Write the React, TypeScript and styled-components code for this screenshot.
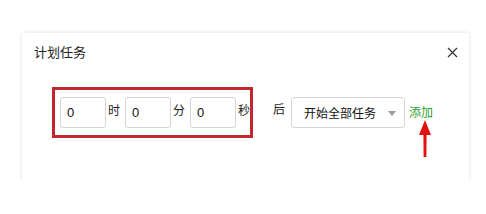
import styled, { createGlobalStyle } from "styled-components";

const Global = createGlobalStyle`
  html, body {
    margin: 0;
    padding: 0;
    background: #ffffff;
    font-family: "Liberation Sans", "Noto Sans CJK SC", sans-serif;
  }
`;

const Page = styled.div`
  padding: 33px 0 0 22px;
`;

const Card = styled.div`
  width: 447px;
  height: 148px;
  box-sizing: border-box;
  background: #fff;
  border-radius: 3px;
  box-shadow: 0 0 4px rgba(0, 0, 0, 0.14);
  display: flex;
  flex-direction: column;
`;

const Header = styled.div`
  display: flex;
  justify-content: space-between;
  align-items: center;
  padding: 8px 10px 0 12px;
  height: 24px;
`;

const Title = styled.div`
  font-size: 13px;
  color: #222;
  line-height: 16px;
`;

const Close = styled.button`
  border: none;
  background: none;
  padding: 0;
  width: 12px;
  height: 12px;
  display: flex;
  cursor: pointer;
`;

const Body = styled.div`
  display: flex;
  align-items: flex-start;
  padding: 22px 0 0 30px;
`;

const TimeBox = styled.div`
  display: flex;
  align-items: flex-start;
  border: 3px solid #c1272d;
  padding: 7px 2px 7px 5px;
  width: 201px;
  height: 51px;
  box-sizing: border-box;
`;

const Field = styled.input`
  width: 46px;
  height: 31px;
  box-sizing: border-box;
  border: 1px solid #d4d4d4;
  border-radius: 3px;
  padding: 0 0 0 6px;
  font-size: 13px;
  color: #111;
  font-family: "Liberation Sans", sans-serif;
  outline: none;
  background: #fff;
`;

const Unit = styled.span<{ $gap?: number }>`
  font-size: 12px;
  color: #222;
  line-height: 14px;
  padding-top: 7px;
  margin: 0 ${(p) => p.$gap ?? 5}px 0 2px;
`;

const After = styled.span`
  font-size: 12px;
  color: #222;
  line-height: 14px;
  margin: 16px 6px 0 20px;
`;

const Select = styled.div`
  width: 114px;
  height: 31px;
  box-sizing: border-box;
  border: 1px solid #d4d4d4;
  border-radius: 3px;
  margin-top: 10px;
  display: flex;
  align-items: center;
  justify-content: space-between;
  padding: 0 8px 0 12px;
  font-size: 12px;
  color: #111;
`;

const Caret = styled.span`
  width: 0;
  height: 0;
  border-left: 4.5px solid transparent;
  border-right: 4.5px solid transparent;
  border-top: 5px solid #9a9a9a;
  margin-top: 2px;
`;

const AddWrap = styled.div`
  position: relative;
  margin: 16px 0 0 4px;
`;

const Add = styled.a`
  font-size: 12px;
  color: #2e9f2e;
  line-height: 14px;
  cursor: pointer;
`;

const Pointer = styled.svg`
  position: absolute;
  left: 9px;
  top: 17px;
`;

export default function App() {
  return (
    <>
      <Global />
      <Page>
        <Card>
          <Header>
            <Title>计划任务</Title>
            <Close aria-label="close">
              <svg width="11" height="11" viewBox="0 0 11 11">
                <path d="M1 1L10 10M10 1L1 10" stroke="#333" strokeWidth="1.2" />
              </svg>
            </Close>
          </Header>
          <Body>
            <TimeBox>
              <Field defaultValue="0" />
              <Unit>时</Unit>
              <Field defaultValue="0" />
              <Unit>分</Unit>
              <Field defaultValue="0" />
              <Unit $gap={0}>秒</Unit>
            </TimeBox>
            <After>后</After>
            <Select>
              <span>开始全部任务</span>
              <Caret />
            </Select>
            <AddWrap>
              <Add>添加</Add>
              <Pointer width="14" height="38" viewBox="0 0 14 38">
                <path d="M7 0L13 15H8.6L8.4 37H5.6L5.4 15H1Z" fill="#e31212" />
              </Pointer>
            </AddWrap>
          </Body>
        </Card>
      </Page>
    </>
  );
}
